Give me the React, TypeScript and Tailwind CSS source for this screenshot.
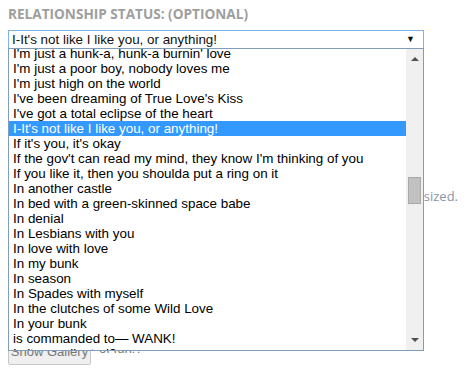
const options = [
  "I'm just a hunk-a, hunk-a burnin' love",
  "I'm just a poor boy, nobody loves me",
  "I'm just high on the world",
  "I've been dreaming of True Love's Kiss",
  "I've got a total eclipse of the heart",
  "I-It's not like I like you, or anything!",
  "If it's you, it's okay",
  "If the gov't can read my mind, they know I'm thinking of you",
  "If you like it, then you shoulda put a ring on it",
  "In another castle",
  "In bed with a green-skinned space babe",
  "In denial",
  "In Lesbians with you",
  "In love with love",
  "In my bunk",
  "In season",
  "In Spades with myself",
  "In the clutches of some Wild Love",
  "In your bunk",
  "is commanded to\u2014 WANK!",
  "Is it complicated?",
];

const selected = "I-It's not like I like you, or anything!";

export default function App() {
  return (
    <div className="relative w-[472px] h-[375px] overflow-hidden bg-white">
      <div className="px-[8px] pt-[6px]">
        <div
          className="text-[13.6px] leading-[16px] font-bold uppercase text-[#9e9e9e]"
          style={{ fontFamily: '"Open Sans", sans-serif' }}
        >
          Relationship Status: (Optional)
        </div>

        <div
          className="mt-[8px] w-[416px] h-[19px] border border-[#7eb4ea] bg-white flex items-center pl-[3px] pr-[8px] text-[13.4px] text-[#111]"
          style={{ fontFamily: '"Liberation Sans", Arial, sans-serif' }}
        >
          <span className="flex-1 leading-[17px]">{selected}</span>
          <span className="text-[9px] leading-none">▼</span>
        </div>

        {/* content under the open list */}
        <div className="h-[141px]" />
        <div
          className="flex justify-end pr-[6px] h-[14px] items-center text-[13px] text-[#8a95a8]"
          style={{ fontFamily: '"Open Sans", sans-serif' }}
        >
          Larger images will be resized.
        </div>
        <div className="h-[137px]" />
        <div
          className="flex items-center gap-[2px] text-[13px]"
          style={{ fontFamily: '"Liberation Sans", Arial, sans-serif' }}
        >
          <button className="w-[83px] h-[24px] border border-[#c8c8c8] bg-[#efefef] text-[#777] rounded-[2px] pb-[2px]">
            Show Gallery
          </button>
          <span className="text-[#777] -mt-[9px]">' of fun!?</span>
        </div>
      </div>

      {/* open dropdown */}
      <div
        className="absolute left-[8px] top-[48px] w-[416px] h-[303px] border border-[#7f9db9] bg-white flex"
        style={{ fontFamily: '"Liberation Sans", Arial, sans-serif' }}
      >
        <div className="flex-1 overflow-hidden">
          <div className="-mt-[3px]">
            {options.map((o) => (
              <div
                key={o}
                className={`h-[15px] leading-[15px] pl-[4px] text-[13.4px] whitespace-nowrap ${
                  o === selected ? "bg-[#3399ff] text-white" : "text-black"
                }`}
              >
                {o}
              </div>
            ))}
          </div>
        </div>
        <div className="relative w-[17px] bg-[#f0f0f0]">
          <div className="absolute left-[5px] top-[8px] w-0 h-0 border-l-[4px] border-r-[4px] border-b-[4px] border-l-transparent border-r-transparent border-b-[#505050]" />
          <div className="absolute left-[2px] top-[128px] w-[13px] h-[27px] bg-[#c1c1c1] border border-[#a9a9a9]" />
          <div className="absolute left-[5px] bottom-[8px] w-0 h-0 border-l-[4px] border-r-[4px] border-t-[4px] border-l-transparent border-r-transparent border-t-[#505050]" />
        </div>
      </div>
    </div>
  );
}
